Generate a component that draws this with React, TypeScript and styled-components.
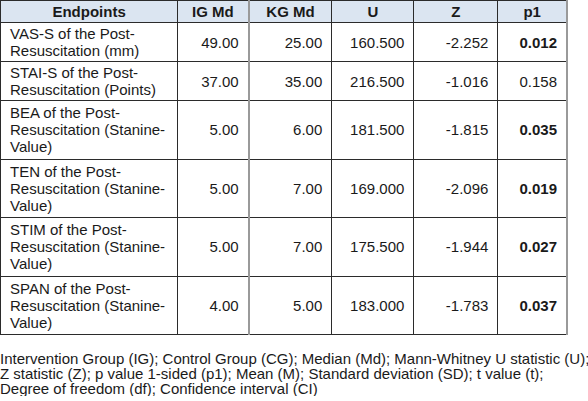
import React from "react";
import styled, { createGlobalStyle } from "styled-components";

const GlobalStyle = createGlobalStyle`
    body {
        margin: 0;
        background: #ffffff;
        font-family: "Liberation Sans", Arial, sans-serif;
        color: #1a1a1a;
    }
`;

const Page = styled.div`
    display: flex;
    flex-direction: column;
    width: 588px;
`;

const Table = styled.table`
    border-collapse: collapse;
    table-layout: fixed;
    width: 568px;
    font-size: 15px;
    line-height: 17px;
    border-top: 1px solid #2b2b2b;
    border-left: 1px solid #2b2b2b;
    border-bottom: 1px solid #2b2b2b;
    border-right: 2px solid #9a9a9a;
`;

const HeadCell = styled.th<{ soft?: boolean }>`
    background: #dbe5f1;
    font-weight: bold;
    text-align: center;
    height: 21px;
    padding: 0 8px;
    border-bottom: 1px solid #2b2b2b;
    border-right: ${({ soft }) => (soft ? "2px solid #9a9a9a" : "1px solid #2b2b2b")};
`;

const Row = styled.tr<{ tall?: boolean }>`
    height: ${({ tall }) => (tall ? "58.5px" : "39px")};
`;

const LabelCell = styled.td`
    text-align: left;
    vertical-align: middle;
    padding: 1px 9px;
    border-bottom: 1px solid #2b2b2b;
    border-right: 1px solid #2b2b2b;
`;

const NumCell = styled.td<{ soft?: boolean; strong?: boolean }>`
    text-align: right;
    vertical-align: middle;
    padding: 1px 9px;
    font-weight: ${({ strong }) => (strong ? "bold" : "normal")};
    border-bottom: 1px solid #2b2b2b;
    border-right: ${({ soft }) => (soft ? "2px solid #9a9a9a" : "1px solid #2b2b2b")};
`;

const Legend = styled.p`
    margin: 16px 0 0 0;
    width: 588px;
    font-size: 15px;
    line-height: 15px;
    white-space: nowrap;
    color: #1a1a1a;
`;

type Entry = {
    label: string;
    ig: string;
    kg: string;
    u: string;
    z: string;
    p: string;
    sig: boolean;
    tall: boolean;
};

const rows: Entry[] = [
    { label: "VAS-S of the Post-Resuscitation (mm)", ig: "49.00", kg: "25.00", u: "160.500", z: "-2.252", p: "0.012", sig: true, tall: false },
    { label: "STAI-S of the Post-Resuscitation (Points)", ig: "37.00", kg: "35.00", u: "216.500", z: "-1.016", p: "0.158", sig: false, tall: false },
    { label: "BEA of the Post-Resuscitation (Stanine-Value)", ig: "5.00", kg: "6.00", u: "181.500", z: "-1.815", p: "0.035", sig: true, tall: true },
    { label: "TEN of the Post-Resuscitation (Stanine-Value)", ig: "5.00", kg: "7.00", u: "169.000", z: "-2.096", p: "0.019", sig: true, tall: true },
    { label: "STIM of the Post-Resuscitation (Stanine-Value)", ig: "5.00", kg: "7.00", u: "175.500", z: "-1.944", p: "0.027", sig: true, tall: true },
    { label: "SPAN of the Post-Resuscitation (Stanine-Value)", ig: "4.00", kg: "5.00", u: "183.000", z: "-1.783", p: "0.037", sig: true, tall: true },
];

export default function App() {
    return (
        <Page>
            <GlobalStyle />
            <Table>
                <colgroup>
                    <col style={{ width: 177 }} />
                    <col style={{ width: 71 }} />
                    <col style={{ width: 83 }} />
                    <col style={{ width: 82 }} />
                    <col style={{ width: 84 }} />
                    <col style={{ width: 69 }} />
                </colgroup>
                <thead>
                    <tr>
                        <HeadCell>Endpoints</HeadCell>
                        <HeadCell soft>IG Md</HeadCell>
                        <HeadCell>KG Md</HeadCell>
                        <HeadCell>U</HeadCell>
                        <HeadCell>Z</HeadCell>
                        <HeadCell>p1</HeadCell>
                    </tr>
                </thead>
                <tbody>
                    {rows.map((r) => (
                        <Row key={r.label} tall={r.tall}>
                            <LabelCell>{r.label}</LabelCell>
                            <NumCell soft>{r.ig}</NumCell>
                            <NumCell>{r.kg}</NumCell>
                            <NumCell>{r.u}</NumCell>
                            <NumCell>{r.z}</NumCell>
                            <NumCell strong={r.sig}>{r.p}</NumCell>
                        </Row>
                    ))}
                </tbody>
            </Table>
            <Legend>
                Intervention Group (IG); Control Group (CG); Median (Md); Mann-Whitney U statistic (U);
                <br />
                Z statistic (Z); p value 1-sided (p1); Mean (M); Standard deviation (SD); t value (t);
                <br />
                Degree of freedom (df); Confidence interval (CI)
            </Legend>
        </Page>
    );
}
